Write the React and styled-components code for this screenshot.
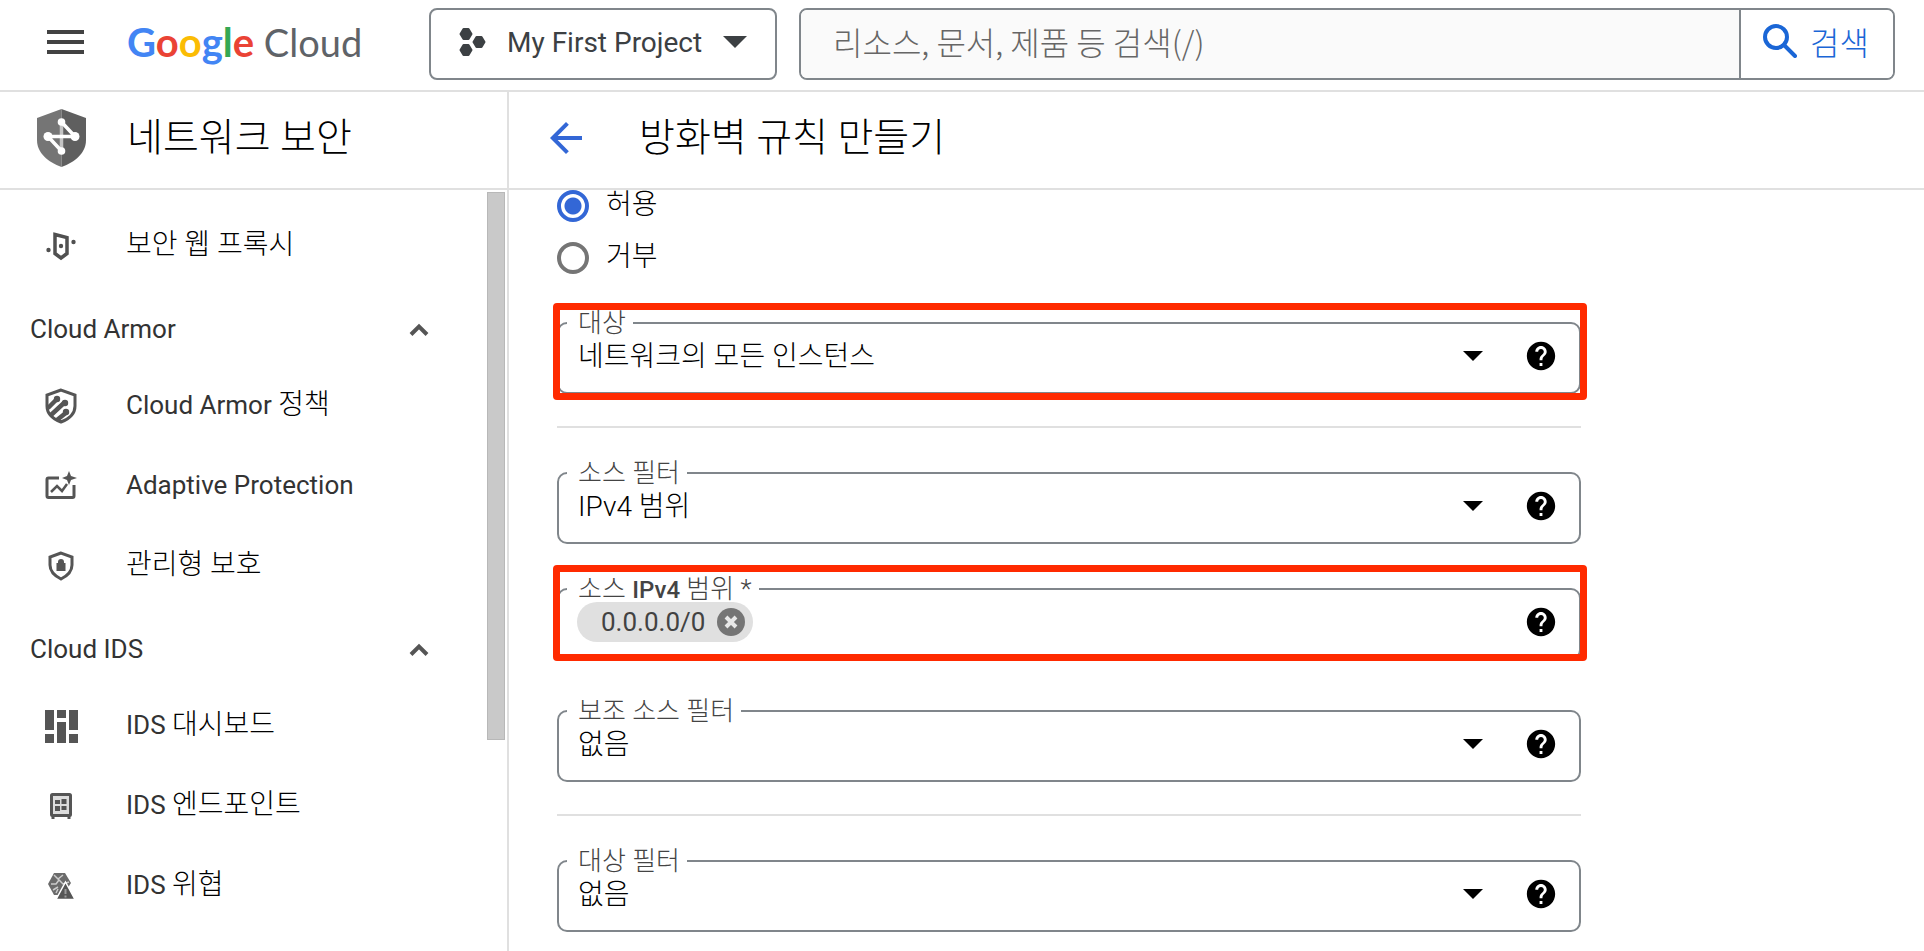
import React, { useState } from 'react';
import styled, { createGlobalStyle, css } from 'styled-components';
import { MdHelp, MdArrowBack } from 'react-icons/md';

const GlobalStyle = createGlobalStyle`
  * {
    box-sizing: border-box;
  }
  html, body, #root {
    height: 100%;
  }
  body {
    margin: 0;
    overflow: hidden;
    background: #fff;
    color: #000;
    font-family: Roboto, 'Noto Sans CJK KR', sans-serif;
    font-size: 28px;
  }
  button, input, select {
    font: inherit;
    color: inherit;
  }
`;

const Page = styled.div`
  height: 100%;
  display: flex;
  flex-direction: column;
`;

const TopBar = styled.header`
  height: 92px;
  flex: none;
  display: flex;
  align-items: flex-start;
  padding: 8px 29px 0 42px;
  border-bottom: 2px solid #e0e0e0;
`;

const IconButton = styled.button`
  display: flex;
  align-items: center;
  justify-content: center;
  flex: none;
  padding: 0;
  border: 0;
  background: none;
  cursor: pointer;
`;

const MenuButton = styled(IconButton)`
  width: 47px;
  height: 68px;
`;

const Logo = styled.a`
  width: 302px;
  flex: none;
  margin-left: 38px;
  font-family: Lato, sans-serif;
  font-size: 40px;
  line-height: 68px;
  white-space: nowrap;
  text-decoration: none;
  color: #5f6368;
`;

const LogoLetter = styled.span`
  color: ${(props) => props.$color};
  font-weight: 700;
`;

const LogoCloud = styled.span`
  font-size: 38px;
`;

const ProjectPicker = styled.button`
  width: 348px;
  height: 72px;
  flex: none;
  display: flex;
  align-items: center;
  padding: 0 28px 4px 28px;
  border: 2px solid #80868b;
  border-radius: 8px;
  background: #fff;
  color: #3c4043;
`;

const ProjectName = styled.span`
  flex: 1;
  margin-left: 20px;
  text-align: left;
  white-space: nowrap;
`;

const SearchForm = styled.form`
  height: 72px;
  flex: 1;
  min-width: 0;
  display: flex;
  margin-left: 22px;
  border: 2px solid #80868b;
  border-radius: 8px;
  overflow: hidden;
`;

const SearchInput = styled.input`
  flex: 1;
  min-width: 0;
  padding: 0 32px 6px;
  border: 0;
  outline: 0;
  background: #fafafa;
  font-family: 'Noto Sans CJK KR', sans-serif;
  font-size: 32px;
  font-weight: 300;

  &::placeholder {
    color: #666;
    opacity: 1;
  }
`;

const SearchButton = styled.button`
  display: flex;
  align-items: center;
  gap: 13px;
  width: 154px;
  padding: 0 0 6px 22px;
  border: 0;
  border-left: 2px solid #80868b;
  background: #fff;
  color: #1a66d6;
  font-family: 'Noto Sans CJK KR', sans-serif;
  font-size: 32px;
  font-weight: 300;
`;

const Body = styled.div`
  flex: 1;
  min-height: 0;
  display: flex;
`;

const Sidebar = styled.aside`
  width: 509px;
  flex: none;
  display: flex;
  flex-direction: column;
  border-right: 2px solid #e0e0e0;
`;

const Main = styled.main`
  flex: 1;
  min-width: 0;
  display: flex;
  flex-direction: column;
`;

const TitleBar = styled.div`
  height: 98px;
  flex: none;
  display: flex;
  align-items: center;
  gap: ${(props) => props.$gap};
  padding: 0 ${(props) => props.$side} 4px;
  border-bottom: 2px solid #e0e0e0;
`;

const Title = styled.h1`
  margin: 0;
  font-size: 39px;
  font-weight: 300;
  line-height: 56px;
  white-space: nowrap;
`;

const SideScroll = styled.div`
  flex: 1;
  min-height: 0;
  display: flex;
  overflow: hidden;
`;

const Nav = styled.nav`
  flex: 1;
  padding-top: 16px;
`;

const ScrollThumb = styled.div`
  width: 18px;
  height: 548px;
  margin: 2px 2px 0 0;
  background: #c9c9c9;
  border: 1px solid #b8b8b8;
`;

const navRow = css`
  width: 100%;
  height: 80px;
  display: flex;
  align-items: center;
  color: #333;
  font-size: 26px;
  line-height: 40px;
`;

const NavLink = styled.a`
  ${navRow}
  padding-left: 41px;
  text-decoration: none;
`;

const NavIcon = styled.span`
  width: 40px;
  display: flex;
  justify-content: center;
  margin-right: 45px;
`;

const NavText = styled.span`
  padding-bottom: 2px;
`;

const SectionButton = styled.button`
  ${navRow}
  justify-content: space-between;
  padding: 8px 58px 0 30px;
  border: 0;
  background: none;
  text-align: left;
`;

// hangul is set a step larger than the latin next to it
const Ko = styled.span`
  font-size: 28px;
  font-weight: 300;
  color: #000;
`;

const Content = styled.form`
  flex: 1;
  min-height: 0;
  overflow: hidden;
  padding: 0 48px;
`;

const Fields = styled.div`
  max-width: 1024px;
  display: flex;
  flex-direction: column;
  gap: 32px;
`;

const RadioGroup = styled.div`
  display: flex;
  flex-direction: column;
  gap: 20px;
  margin-bottom: 4px;
`;

const RadioLabel = styled.label`
  height: 32px;
  display: flex;
  align-items: center;
  gap: 17px;
  font-weight: 300;
  line-height: 28px;
`;

const Radio = styled.input`
  appearance: none;
  width: 32px;
  height: 32px;
  margin: 0;
  border: 4px solid #757575;
  border-radius: 50%;

  &:checked {
    border-color: #3367d6;
    background: radial-gradient(circle, #3367d6 8px, #fff 9px);
  }
`;

const RadioText = styled.span`
  padding-bottom: 2px;
`;

const FieldBox = styled.div`
  position: relative;
  margin-bottom: ${(props) => (props.$hint ? '6px' : '0')};
`;

const Highlight = styled.div`
  position: absolute;
  inset: ${(props) => props.$inset};
  border: 7px solid #ff2a00;
  border-radius: 4px;
  pointer-events: none;
`;

const Outline = styled.fieldset`
  min-width: 0;
  margin: 0;
  padding: 0 8px 16px;
  border: 2px solid #80868b;
  border-radius: 10px;
`;

const Legend = styled.legend`
  padding: 0 7px 0 11px;
  color: #444;
  font-size: 26px;
  font-weight: 300;
  line-height: 26px;
`;

const LegendLatin = styled.span`
  font-size: 24px;
  font-weight: 500;
  line-height: 20px;
`;

const FieldRow = styled.div`
  height: 40px;
  display: flex;
  align-items: center;
  justify-content: space-between;
  padding-right: 13px;
`;

const SelectWrap = styled.div`
  flex: 1;
  display: grid;
  align-items: center;

  > * {
    grid-area: 1 / 1;
  }

  > svg {
    justify-self: end;
    margin-right: 41px;
    pointer-events: none;
  }
`;

const Select = styled.select`
  appearance: none;
  width: 100%;
  height: 40px;
  padding: 0 80px 0 11px;
  border: 0;
  outline: 0;
  background: none;
  font-weight: 300;
`;

const Chip = styled.span`
  height: 40px;
  display: flex;
  align-items: center;
  gap: 12px;
  margin-left: 10px;
  padding: 0 8px 0 24px;
  border-radius: 20px;
  background: #e0e0e0;
  color: #424242;
  font-size: 26px;
`;

const Divider = styled.hr`
  width: 100%;
  height: 2px;
  margin: 0;
  border: 0;
  background: #e0e0e0;
`;

const Caret = ({ width = 20, height = 10, color = '#000' }) => (
  <svg width={width} height={height} viewBox="0 0 20 10">
    <path d="M0 0h20L10 10z" fill={color} />
  </svg>
);

const MenuIcon = () => (
  <svg width="37" height="24" viewBox="0 0 37 24">
    <path d="M0 2h37M0 12h37M0 22h37" stroke="#424242" strokeWidth="4" />
  </svg>
);

const SearchIcon = () => (
  <svg width="34" height="34" viewBox="0 0 34 34" fill="none" stroke="currentColor" strokeWidth="4">
    <circle cx="13" cy="13" r="11" />
    <path d="M21 21l11 11" strokeLinecap="round" />
  </svg>
);

const ProjectIcon = () => (
  <svg width="28" height="30" viewBox="0 0 28 30" fill="#3c4043" stroke="#3c4043" strokeWidth="2" strokeLinejoin="round">
    <path d="M4.500 2h5l3 5-3 5h-5l-3-5z" />
    <path d="M4.500 18h5l3 5-3 5h-5l-3-5z" />
    <path d="M17.500 10h5l3 5-3 5h-5l-3-5z" />
  </svg>
);

const SecurityLogo = () => (
  <svg width="49" height="60" viewBox="0 0 49 60">
    <path d="M24.500 1 0 10v22c0 13 11 22 24.500 27z" fill="#757575" />
    <path d="M24.500 1 49 10v22c0 13-11 22-24.500 27z" fill="#5f5f5f" />
    <path d="M24.500 14v29" stroke="#c4c4c4" strokeWidth="3.500" />
    <path d="M24.500 14 38 28.500H11L24.500 43" stroke="#fff" strokeWidth="3.500" fill="none" />
    <g fill="#fff">
      <circle cx="24.500" cy="14" r="3.800" />
      <circle cx="11" cy="28.500" r="4.500" />
      <circle cx="38" cy="28.500" r="4.500" />
      <circle cx="24.500" cy="43" r="3.800" />
    </g>
  </svg>
);

const ProxyIcon = () => (
  <svg width="30" height="30" viewBox="0 0 30 30" fill="none">
    <path d="M9 3.500 21 6.500v16L15 27l-6-4.500z" stroke="#505050" strokeWidth="3.500" />
    <circle cx="15" cy="15" r="2.200" fill="#505050" />
    <circle cx="2.500" cy="19" r="2.200" fill="#505050" />
    <circle cx="27.500" cy="11" r="2.200" fill="#505050" />
  </svg>
);

const ArmorIcon = () => (
  <svg width="32" height="36" viewBox="0 0 32 36" fill="none">
    <path d="M16 2 2 7v11c0 8 6 13 14 16 8-3 14-8 14-16V7z" stroke="#555" strokeWidth="3" />
    <path d="M3 20 12 11M6 27 20 14M12 32 22 24" stroke="#555" strokeWidth="4.500" />
    <circle cx="12" cy="11" r="3.200" fill="#555" />
    <circle cx="20" cy="15" r="3.200" fill="#555" />
    <circle cx="21" cy="24" r="3.200" fill="#555" />
  </svg>
);

const AdaptiveIcon = () => (
  <svg width="32" height="30" viewBox="0 0 32 30" fill="none">
    <path d="M14 7H3.500Q2 7 2 8.500V25q0 1.500 1.500 1.500h24q1.500 0 1.500-1.500V14" stroke="#555" strokeWidth="3" />
    <path d="M6 21l6-6 5 5 5-7" stroke="#555" strokeWidth="2.500" />
    <path d="M24 0l2 5 6 2-6 2-2 5-2-5-5-2 5-2z" fill="#555" />
  </svg>
);

const ManagedIcon = () => (
  <svg width="26" height="30" viewBox="0 0 26 30" fill="none">
    <path d="M13 2 2 6v8c0 7 5 11 11 14 6-3 11-7 11-14V6z" stroke="#555" strokeWidth="3" />
    <path d="M8.500 12H10v-1a3 3 0 0 1 6 0v1h1.500v8h-9z" fill="#555" />
  </svg>
);

const DashboardIcon = () => (
  <svg width="33" height="33" viewBox="0 0 33 33" fill="#555">
    <path d="M0 0h9v20H0zM0 24h9v9H0zM12 0h9v8h-9zM12 12h9v21h-9zM24 0h9v20h-9zM24 24h9v9h-9z" />
  </svg>
);

const EndpointIcon = () => (
  <svg width="24" height="28" viewBox="0 0 24 28">
    <path d="M4 27v-3M20 27v-3" stroke="#555" strokeWidth="3" />
    <rect x="2.500" y="2.500" width="19" height="21" rx="1" fill="#ddd" stroke="#555" strokeWidth="3" />
    <path d="M6 8h5v4H6zM12.500 7h5v5h-5zM6 14h5v5H6zM12.500 14h5v4h-5z" fill="#555" />
  </svg>
);

const ThreatIcon = () => (
  <svg width="28" height="28" viewBox="0 0 28 28">
    <path d="M7 1h11l6 10-4 6-7 6H7L1 12z" fill="#6b6b6b" />
    <path d="M7 3l4 4 5-4M4 12h5l3-4 4 4 6-2M6 18l5-3M9 21l2-4" stroke="#ccc" strokeWidth="1.500" fill="none" />
    <path d="M18.500 10 28 27.500H9z" fill="#555" stroke="#fff" strokeWidth="1.500" />
    <path d="M18.500 17v5M18.500 23.500v2" stroke="#999" strokeWidth="2" />
  </svg>
);

const ChevronUp = () => (
  <svg width="20" height="14" viewBox="0 0 20 14">
    <path d="M2 11.500 10 3.500l8 8" fill="none" stroke="#555" strokeWidth="4" />
  </svg>
);

const RemoveIcon = () => (
  <svg width="28" height="28" viewBox="0 0 28 28">
    <circle cx="14" cy="14" r="14" fill="#757575" />
    <path d="M9 9l10 10M19 9 9 19" stroke="#e8e8e8" strokeWidth="4" />
  </svg>
);

const armorLinks = [
  { en: 'Cloud Armor ', ko: '정책', icon: <ArmorIcon /> },
  { en: 'Adaptive Protection', icon: <AdaptiveIcon /> },
  { ko: '관리형 보호', icon: <ManagedIcon /> },
];

const idsLinks = [
  { en: 'IDS ', ko: '대시보드', icon: <DashboardIcon /> },
  { en: 'IDS ', ko: '엔드포인트', icon: <EndpointIcon /> },
  { en: 'IDS ', ko: '위협', icon: <ThreatIcon /> },
];

function NavItem({ en, ko, icon }) {
  return (
    <NavLink href="#">
      <NavIcon>{icon}</NavIcon>
      <NavText>
        {en}
        {ko && <Ko>{ko}</Ko>}
      </NavText>
    </NavLink>
  );
}

function NavSection({ title, links }) {
  const [open, setOpen] = useState(true);
  return (
    <>
      <SectionButton type="button" aria-expanded={open} onClick={() => setOpen(!open)}>
        <NavText>{title}</NavText>
        <ChevronUp />
      </SectionButton>
      {open && links.map((link) => <NavItem key={link.ko || link.en} {...link} />)}
    </>
  );
}

function HelpButton() {
  return (
    <IconButton type="button" aria-label="도움말">
      <MdHelp size={34} color="#000" />
    </IconButton>
  );
}

function SelectField({ id, label, value, highlight }) {
  return (
    <FieldBox>
      <Outline>
        <Legend>
          <label htmlFor={id}>{label}</label>
        </Legend>
        <FieldRow>
          <SelectWrap>
            <Select id={id} defaultValue={value}>
              <option>{value}</option>
            </Select>
            <Caret />
          </SelectWrap>
          <HelpButton />
        </FieldRow>
      </Outline>
      {highlight && <Highlight $inset={highlight} />}
    </FieldBox>
  );
}

function App() {
  return (
    <Page>
      <GlobalStyle />
      <TopBar>
        <MenuButton type="button" aria-label="메뉴">
          <MenuIcon />
        </MenuButton>
        <Logo href="#">
          <LogoLetter $color="#4285f4">G</LogoLetter>
          <LogoLetter $color="#ea4335">o</LogoLetter>
          <LogoLetter $color="#fbbc04">o</LogoLetter>
          <LogoLetter $color="#4285f4">g</LogoLetter>
          <LogoLetter $color="#34a853">l</LogoLetter>
          <LogoLetter $color="#ea4335">e</LogoLetter>
          <LogoCloud> Cloud</LogoCloud>
        </Logo>
        <ProjectPicker type="button">
          <ProjectIcon />
          <ProjectName>My First Project</ProjectName>
          <Caret width={24} height={12} color="#3c4043" />
        </ProjectPicker>
        <SearchForm role="search">
          <SearchInput aria-label="검색" placeholder="리소스, 문서, 제품 등 검색(/)" />
          <SearchButton type="button">
            <SearchIcon />
            검색
          </SearchButton>
        </SearchForm>
      </TopBar>
      <Body>
        <Sidebar>
          <TitleBar $side="37px" $gap="41px">
            <SecurityLogo />
            <Title>네트워크 보안</Title>
          </TitleBar>
          <SideScroll>
            <Nav>
              <NavItem ko="보안 웹 프록시" icon={<ProxyIcon />} />
              <NavSection title="Cloud Armor" links={armorLinks} />
              <NavSection title="Cloud IDS" links={idsLinks} />
            </Nav>
            <ScrollThumb />
          </SideScroll>
        </Sidebar>
        <Main>
          <TitleBar $side="33px" $gap="49px">
            <IconButton type="button" aria-label="뒤로">
              <MdArrowBack size={48} color="#3367d6" />
            </IconButton>
            <Title>방화벽 규칙 만들기</Title>
          </TitleBar>
          <Content>
            <Fields>
              <RadioGroup>
                <RadioLabel>
                  <Radio type="radio" name="action" defaultChecked />
                  <RadioText>허용</RadioText>
                </RadioLabel>
                <RadioLabel>
                  <Radio type="radio" name="action" />
                  <RadioText>거부</RadioText>
                </RadioLabel>
              </RadioGroup>
              <SelectField id="target" label="대상" value="네트워크의 모든 인스턴스" highlight="-7px -6px -6px -4px" />
              <Divider />
              <SelectField id="source-filter" label="소스 필터" value="IPv4 범위" />
              <FieldBox $hint>
                <Outline>
                  <Legend>
                    소스 <LegendLatin>IPv4</LegendLatin> 범위 *
                  </Legend>
                  <FieldRow>
                    <Chip>
                      0.0.0.0/0
                      <IconButton type="button" aria-label="삭제">
                        <RemoveIcon />
                      </IconButton>
                    </Chip>
                    <HelpButton />
                  </FieldRow>
                </Outline>
                <Highlight $inset="-11px -6px -1px -4px" />
              </FieldBox>
              <SelectField id="second-filter" label="보조 소스 필터" value="없음" />
              <Divider />
              <SelectField id="target-filter" label="대상 필터" value="없음" />
            </Fields>
          </Content>
        </Main>
      </Body>
    </Page>
  );
}

export default App;
